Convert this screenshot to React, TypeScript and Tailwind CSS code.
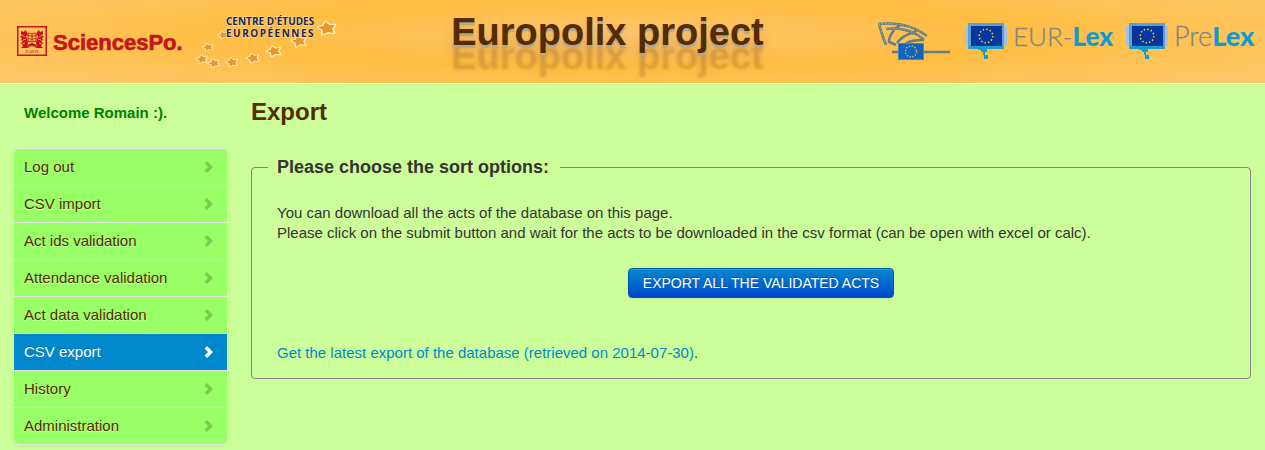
import React from "react";

const menu = [
  "Log out",
  "CSV import",
  "Act ids validation",
  "Attendance validation",
  "Act data validation",
  "CSV export",
  "History",
  "Administration",
];
const current = "CSV export";

function SciencesPoLogo() {
  return (
    <svg width="168" height="30" viewBox="0 0 168 30" className="overflow-visible" role="img" aria-label="SciencesPo.">
      <rect x="0.75" y="0.75" width="28.5" height="28.5" fill="none" stroke="#c4151c" strokeWidth="1.5" />
      <g fill="#c4151c">
        <path d="M4 5l3 1 1-2 2 2 1 3-2 1 1 3 1 4-1 3 2 2H4l2-2-2-3 2-2-2-1 1-2-2-1 2-2-1-1z" />
        <path d="M26 5l-3 1-1-2-2 2-1 3 2 1-1 3-1 4 1 3-2 2h8l-2-2 2-3-2-2 2-1-1-2 2-1-2-2 1-1z" />
        <path d="M10 19l5-2 5 2-1 2-4-1-4 1z" />
      </g>
      <g fill="none" stroke="#c4151c">
        <path d="M11 7.5q2-1 4 0.500q2-1.500 4-0.500v8q-2-1-4 0.500q-2-1.500-4-0.500zM11 10q2-1 4 0.500q2-1.500 4-0.500M11 13q2-1 4 0.500q2-1.500 4-0.500M15 8v8" strokeWidth="0.900" />
      </g>
      <g stroke="#ffc559" strokeWidth="0.700" fill="none">
        <path d="M5 9l3 2M6 14l3-1M5 18l3-1M25 9l-3 2M24 14l-3-1M25 18l-3-1" />
      </g>
      <text x="15" y="27" textAnchor="middle" fontFamily="Liberation Serif, serif" fontSize="5" fill="#c4151c">PARIS</text>
      <text x="36" y="24" fontFamily="Liberation Sans, sans-serif" fontWeight="700" fontSize="22" fill="#c4151c" stroke="#c4151c" strokeWidth="0.600">SciencesPo.</text>
    </svg>
  );
}

const stars = [
  [130, 15, 1.7, -10],
  [102, 28, 1.4, -14],
  [77, 38, 1.35, -18],
  [56, 45, 1.2, -20],
  [35, 49, 1.15, -15],
  [17, 50, 1.1, -20],
  [5, 46, 1.05, -10],
  [11, 34, 1, -15],
  [26, 22, 0.9, -20],
];

function CentreLogo() {
  return (
    <svg width="140" height="58" viewBox="0 0 140 58" className="overflow-visible" role="img" aria-label="Centre d'études européennes">
      {stars.map(([x, y, s, r]) => (
        <path
          key={x}
          transform={`translate(${x} ${y}) scale(${s} ${s * 0.75}) rotate(${r})`}
          d="M0-5L1.700-2L5-1.500L2.800 1L3.300 4.500L0 3.200L-3.300 4.500L-2.800 1L-5-1.500L-1.700-2Z"
          fill="#e8982a"
          stroke="#fff3cc"
          strokeWidth="1.800"
          paintOrder="stroke"
          strokeLinejoin="round"
        />
      ))}
      <g fontFamily="Open Sans, sans-serif" fontWeight="700" fontSize="10" fill="#1c2350" stroke="#ffe0a0" strokeWidth="1" paintOrder="stroke">
        <text x="29" y="12">CENTRE D'ÉTUDES</text>
        <text x="29" y="24" className="tracking-[0.15em]">EUROPÉENNES</text>
      </g>
    </svg>
  );
}

const parliamentArcs = "M0 2C18 0 36 4 49 14M1 2C3 9 5 16 8 23M8 7C24 5 38 10 46 18";

function ParliamentLogo() {
  return (
    <svg width="73" height="40" viewBox="0 0 73 40" role="img" aria-label="European Parliament">
      <g fill="none" stroke="#667d82" strokeWidth="2.600">
        <path d={parliamentArcs} />
        <path d="M16 8C13 12 11 17 11 20L18 23" />
        <path d="M22 3L17 7M39 8L34 12" />
        <path d="M34 11C27 13 22 17 19 21M46 18C39 18 32 18 27 22" />
        <path d="M14 30H72" />
      </g>
      <path d={parliamentArcs} fill="none" stroke="#b5b08a" strokeWidth="0.800" strokeDasharray="2 1.500" />
      <rect x="20.500" y="21.500" width="25" height="16" fill="#1262c0" stroke="#4488bf" />
      <circle cx="33" cy="29.500" r="5.500" fill="none" stroke="#c9c95c" strokeWidth="1.400" strokeDasharray="1.300 1.580" />
    </svg>
  );
}

function LexLogo({ light, width, size }: { light: string; width: number; size: number }) {
  return (
    <svg width={width} height="38" viewBox={`0 0 ${width} 38`} className="overflow-visible" role="img" aria-label={`${light}Lex`}>
      <path d="M3 1H39V4H42V24H39V27H3V24H0V4H3Z" fill="#a5c0e6" />
      <path d="M3 1H39V27H3Z" fill="#5c9fd4" />
      <path d="M4 24H38V27H22V30H20V33H18V30H16V28H13V27H4Z" fill="#129dd3" />
      <rect x="19" y="33" width="4" height="4" fill="#129dd3" />
      <rect x="6" y="4" width="31" height="20" fill="#07379c" />
      <circle cx="21" cy="14" r="6.800" fill="none" stroke="#e8d63b" strokeWidth="1.500" strokeDasharray="1.500 2.060" />
      <text x="48" y="24" fontFamily="Lato, sans-serif" fontSize={size} fontWeight="300" fill="#7d878c" stroke="#7d878c" strokeWidth="0.300">
        {light}
        <tspan fontWeight="900" fill="#0e9bd4" stroke="none">Lex</tspan>
      </text>
    </svg>
  );
}

function Chevron() {
  return (
    <svg width="9" height="12" viewBox="0 0 9 12" aria-hidden="true">
      <path d="M3 0L9 6L3 12L0.500 9.500L4 6L0.500 2.500Z" fill="currentColor" />
    </svg>
  );
}

export default function App() {
  return (
    <div className="min-h-screen bg-[#ccff99] font-['Liberation_Sans',Arial,sans-serif] text-[15px] leading-5 text-[#333333]">
      <header className="flex h-[84px] items-start justify-between border-b border-[#fff3cc] bg-[radial-gradient(ellipse_60%_80%_at_50%_42%,#ffc670_0%,#ffbd42_50%,#ffc767_100%)] pr-2.5 pl-[17px]">
        <div className="flex shrink-0 items-start gap-3">
          <a href="#sciencespo" className="mt-[26px]"><SciencesPoLogo /></a>
          <a href="#centre" className="mt-[13px]"><CentreLogo /></a>
        </div>
        <h1 className="mt-3 shrink-0 text-[38px] leading-10 font-bold whitespace-nowrap text-[#552b00] [text-shadow:0_3px_1px_#b3a68c,0_24px_3px_rgba(85,43,0,0.2),0_8px_13px_rgba(0,0,0,0.1),0_18px_23px_rgba(0,0,0,0.08)]">
          Europolix project
        </h1>
        <div className="mt-[22px] flex shrink-0 items-start gap-3.5">
          <a href="#parliament"><ParliamentLogo /></a>
          <a href="#eur-lex"><LexLogo light="EUR-" width={147} size={26} /></a>
          <a href="#prelex"><LexLogo light="Pre" width={129} size={27} /></a>
        </div>
      </header>

      <div className="flex items-start gap-[23px] pr-3.5 pl-[13px]">
        <aside className="w-[215px] shrink-0 pt-[19px]">
          <p className="px-[11px] font-bold text-[#008000]">Welcome Romain :).</p>
          <nav className="mt-[25px]">
            <ul className="overflow-hidden rounded-md border border-[#e5e5e5] shadow-[0_1px_4px_rgba(0,0,0,0.07)]">
              {menu.map((item) => (
                <li key={item} className="border-b border-[#e5e5e5] last:border-b-0">
                  <a
                    href="#menu"
                    aria-current={item === current ? "page" : undefined}
                    className={
                      item === current
                        ? "flex items-center justify-between bg-[#0088cc] py-2 pr-3.5 pl-2.5 text-white [text-shadow:0_-1px_0_rgba(0,0,0,0.2)]"
                        : "flex items-center justify-between bg-[#99ff66] py-2 pr-3.5 pl-2.5 text-[#552b00] [text-shadow:0_1px_0_rgba(255,255,255,0.5)]"
                    }
                  >
                    {item}
                    <span className={item === current ? "text-white" : "text-black/20"}><Chevron /></span>
                  </a>
                </li>
              ))}
            </ul>
          </nav>
        </aside>

        <main className="min-w-0 flex-1 pt-3">
          <h2 className="text-2xl leading-8 font-bold text-[#552b00]">Export</h2>
          <form className="mt-[29px]" onSubmit={(e) => e.preventDefault()}>
            <fieldset className="rounded border border-[#8a8090] pr-[5px] pb-[15px] pl-4">
              <legend className="pr-[11px] pl-[9px] text-lg leading-5 font-bold">Please choose the sort options:</legend>
              <div className="pt-[26px] pl-[9px]">
                <p>
                  You can download all the acts of the database on this page.
                  <br />
                  Please click on the submit button and wait for the acts to be downloaded in the csv format (can be open with excel or calc).
                </p>
                <div className="mt-[25px] flex justify-center">
                  <button
                    type="submit"
                    className="rounded border border-[#0055b3] bg-linear-to-b from-[#0088cc] to-[#0044cc] px-3.5 py-1 text-sm leading-5 text-white shadow-[inset_0_1px_0_rgba(255,255,255,0.2),0_1px_2px_rgba(0,0,0,0.05)] [text-shadow:0_-1px_0_rgba(0,0,0,0.25)]"
                  >
                    EXPORT ALL THE VALIDATED ACTS
                  </button>
                </div>
                <p className="mt-[45px]">
                  <a href="#latest" className="text-[#0088cc]">Get the latest export of the database (retrieved on 2014-07-30)</a>.
                </p>
              </div>
            </fieldset>
          </form>
        </main>
      </div>
    </div>
  );
}
